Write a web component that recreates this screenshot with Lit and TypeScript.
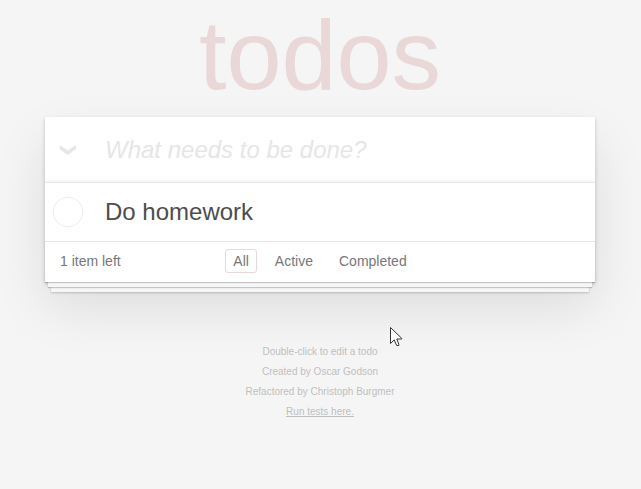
import { LitElement, html, css } from "lit";
import { customElement, state } from "lit/decorators.js";
import { classMap } from "lit/directives/class-map.js";

@customElement("app-root")
export class AppRoot extends LitElement {
  static styles = css`
    :host {
      display: block;
      position: relative;
      height: 489px;
      background: #f5f5f5;
      color: #4d4d4d;
      font-family: "Liberation Sans", Arial, sans-serif;
    }
    .title {
      width: 640px;
      margin: 0;
      height: 117px;
      line-height: 110px;
      font-size: 99px;
      font-weight: 400;
      text-align: center;
      color: #ead7d7;
    }
    .card {
      width: 550px;
      margin: 0 0 0 45px;
      background: #fff;
      box-shadow: 0 2px 4px rgba(0, 0, 0, 0.2), 0 25px 50px rgba(0, 0, 0, 0.1);
    }
    .row {
      display: flex;
      align-items: center;
      box-sizing: border-box;
      font-size: 24px;
    }
    .entry {
      height: 65px;
      box-shadow: inset 0 -2px 1px rgba(0, 0, 0, 0.03);
      color: #e6e6e6;
      font-style: italic;
    }
    .item {
      height: 59px;
      border-top: 1px solid #e6e6e6;
    }
    .lead {
      display: flex;
      box-sizing: border-box;
      width: 60px;
      padding-left: 7px;
    }
    .lead svg {
      display: block;
    }
    .entry .lead {
      padding: 1px 0 0 14px;
    }
    .footer {
      display: grid;
      grid-template-columns: 1fr auto 1fr;
      align-items: center;
      box-sizing: border-box;
      height: 41px;
      padding: 0 15px 2px;
      border-top: 1px solid #e6e6e6;
      background: #fff;
      color: #777;
      font-size: 14px;
      box-shadow: 0 1px 1px rgba(0, 0, 0, 0.2), 0 8px 0 -3px #f6f6f6,
        0 9px 1px -3px rgba(0, 0, 0, 0.2), 0 16px 0 -6px #f6f6f6,
        0 17px 2px -6px rgba(0, 0, 0, 0.2);
    }
    .filters {
      display: flex;
      gap: 8px;
    }
    .filter {
      box-sizing: border-box;
      height: 24px;
      line-height: 22px;
      padding: 0 7px;
      margin: 0 1px;
      border: 1px solid transparent;
      border-radius: 3px;
    }
    .selected {
      border-color: #ead7d7;
    }
    .info {
      width: 640px;
      margin-top: 60px;
      text-align: center;
      font-size: 10px;
      line-height: 20px;
      color: #bfbfbf;
    }
    .info p {
      margin: 0;
    }
    .link {
      text-decoration: underline;
    }
    .pointer {
      position: absolute;
      left: 390px;
      top: 327px;
    }
  `;

  @state() private filter = "All";

  render() {
    return html`
      <h1 class="title">todos</h1>
      <section class="card">
        <div class="row entry">
          <span class="lead">
            <svg width="18" height="12" viewBox="0 0 18 12">
              <path d="M.6 1 L8.8 6.6 L17 1 V5 L8.8 11 L.6 5 Z" fill="#e6e6e6" />
            </svg>
          </span>
          <span>What needs to be done?</span>
        </div>
        <div class="row item">
          <span class="lead">
            <svg width="32" height="32" viewBox="0 0 32 32">
              <circle cx="16" cy="16" r="14.8" fill="none" stroke="#ededed" />
            </svg>
          </span>
          <span>Do homework</span>
        </div>
        <footer class="footer">
          <span>1 item left</span>
          <nav class="filters">
            ${["All", "Active", "Completed"].map(
              (name) => html`<a
                class=${classMap({ filter: true, selected: name === this.filter })}
                @click=${() => (this.filter = name)}
                >${name}</a
              >`
            )}
          </nav>
        </footer>
      </section>
      <div class="info">
        <p>Double-click to edit a todo</p>
        <p>Created by Oscar Godson</p>
        <p>Refactored by Christoph Burgmer</p>
        <p><a class="link">Run tests here.</a></p>
      </div>
      <svg class="pointer" width="13" height="20" viewBox="0 0 13 20">
        <path
          d="M.5 .5 V16.5 L4.2 12.9 L6.7 18.5 H8.8 V17.2 L6.8 12 H11.8 V11.4 Z"
          fill="#fff"
          stroke="#333338"
        />
      </svg>
    `;
  }
}
